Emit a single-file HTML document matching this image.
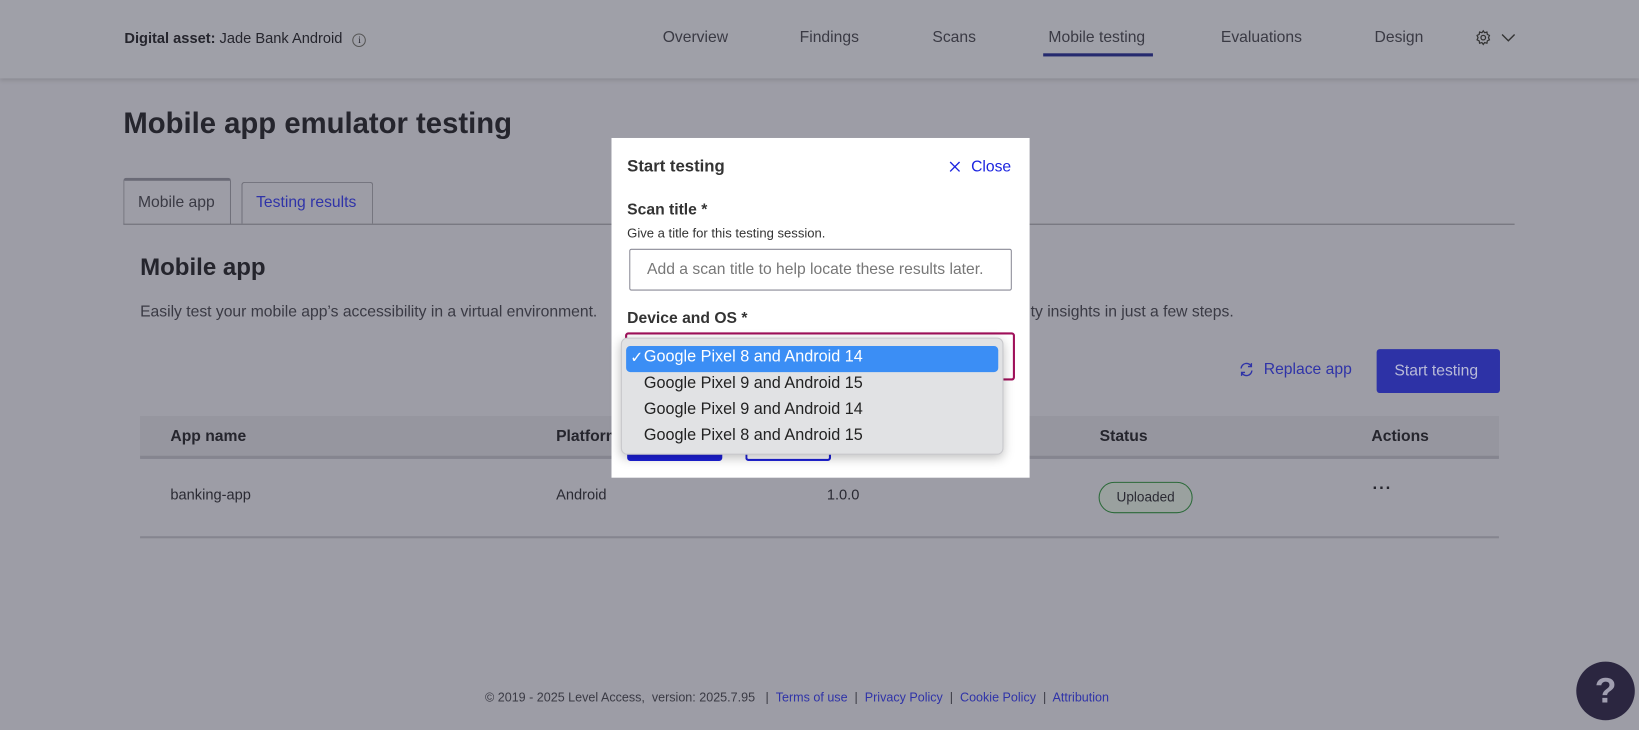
<!DOCTYPE html>
<html><head><style>
*{box-sizing:border-box;margin:0;padding:0}
body{width:1639px;height:729px;overflow:hidden;background:#9d9da6;font-family:"Liberation Sans",sans-serif;color:#2a2a33;position:relative}
#w{position:absolute;left:0;top:0;width:1568px;height:698px;transform:scale(1.04528);transform-origin:0 0}
.hdr{position:absolute;left:0;top:0;width:1568px;height:75px;background:#9fa0a8;box-shadow:0 2px 4px rgba(0,0,0,.12)}
.abs{position:absolute;white-space:nowrap}
.nav{font-size:15px;color:#3a3a44;top:27px}
.link{color:#2f33a8}
</style></head><body><div id="w">
<div class="hdr"></div>
<div class="abs" style="left:119px;top:28px;font-size:14px;color:#25252d"><b>Digital asset:</b> Jade Bank Android <span style="display:inline-block;width:13px;height:13px;border:1px solid #555;border-radius:50%;font-size:9px;text-align:center;line-height:11px;margin-left:6px;font-family:'Liberation Serif',serif">i</span></div>
<div class="abs nav" style="left:634px">Overview</div>
<div class="abs nav" style="left:765px">Findings</div>
<div class="abs nav" style="left:892px">Scans</div>
<div class="abs nav" style="left:1003px">Mobile testing</div>
<div class="abs" style="left:998px;top:51px;width:105px;height:3px;background:#252a6e"></div>
<div class="abs nav" style="left:1168px">Evaluations</div>
<div class="abs nav" style="left:1315px">Design</div>
<svg class="abs" style="left:1411px;top:28px" width="16" height="16" viewBox="0 0 16 16" fill="none" stroke="#333" stroke-width="1.2"><circle cx="8" cy="8" r="2.2"/><path d="M8 1.5l1.3 1.8 2.2-.6.4 2.2 2 1-.9 2.1.9 2.1-2 1-.4 2.2-2.2-.6L8 14.5l-1.3-1.8-2.2.6-.4-2.2-2-1 .9-2.1-.9-2.1 2-1 .4-2.2 2.2.6z"/></svg>
<svg class="abs" style="left:1436px;top:31px" width="14" height="10" viewBox="0 0 14 10" fill="none" stroke="#333" stroke-width="1.3"><path d="M1 2l6 6 6-6"/></svg>

<div class="abs" style="left:118px;top:102px;font-size:28px;font-weight:bold;color:#25252d">Mobile app emulator testing</div>
<div class="abs" style="left:118px;top:170px;width:103px;height:45px;border:1px solid #70707a;border-top:3px solid #6a6a76;border-bottom:none;border-radius:3px 3px 0 0;font-size:15px;color:#3a3a44;padding:12px 0 0 13px">Mobile app</div>
<div class="abs" style="left:231px;top:174px;width:126px;height:40px;border:1px solid #70707a;border-bottom:none;border-radius:3px 3px 0 0;font-size:15px;color:#2f33a8;padding:10px 0 0 13px">Testing results</div>
<div class="abs" style="left:118px;top:214px;width:1331px;height:1px;background:#6c6c76"></div>
<div class="abs" style="left:134px;top:242px;font-size:23px;font-weight:bold;color:#25252d">Mobile app</div>
<div class="abs" style="left:134px;top:290px;font-size:15px;color:#3a3a44">Easily test your mobile app’s accessibility in a virtual environment.</div>
<div class="abs" style="left:986px;top:290px;font-size:15px;color:#3a3a44">ty insights in just a few steps.</div>
<svg class="abs" style="left:1185px;top:346px" width="15" height="15" viewBox="0 0 16 16" fill="none" stroke="#2f33a8" stroke-width="1.4"><path d="M2.5 7A5.5 5.5 0 0 1 13 5M13.5 9A5.5 5.5 0 0 1 3 11M13 1.5V5H9.5M3 14.5V11h3.5"/></svg>
<div class="abs link" style="left:1209px;top:345px;font-size:15px">Replace app</div>
<div class="abs" style="left:1317px;top:334px;width:118px;height:42px;background:#2d32a6;border-radius:3px;color:#b9bbd8;font-size:15px;padding:12px 0 0 17px">Start testing</div>
<div class="abs" style="left:134px;top:398px;width:1300px;height:41px;background:#96969f;border-bottom:3px solid #85858f"></div>
<div class="abs" style="left:163px;top:409px;font-size:15px;font-weight:bold;color:#25252d">App name</div>
<div class="abs" style="left:532px;top:409px;font-size:15px;font-weight:bold;color:#25252d">Platform</div>
<div class="abs" style="left:1052px;top:409px;font-size:15px;font-weight:bold;color:#25252d">Status</div>
<div class="abs" style="left:1312px;top:409px;font-size:15px;font-weight:bold;color:#25252d">Actions</div>
<div class="abs" style="left:163px;top:465px;font-size:14px;color:#2a2a33">banking-app</div>
<div class="abs" style="left:532px;top:465px;font-size:14px;color:#2a2a33">Android</div>
<div class="abs" style="left:791px;top:465px;font-size:14px;color:#2a2a33">1.0.0</div>
<div class="abs" style="left:1051px;top:461px;width:90px;height:30px;border:1px solid #2c6a3a;border-radius:15px;background:#9aa19f;font-size:13px;color:#2a2a33;text-align:center;line-height:28px">Uploaded</div>
<div class="abs" style="left:1313px;top:459px;font-size:16px;font-weight:bold;color:#25252d;letter-spacing:1px">···</div>
<div class="abs" style="left:134px;top:513px;width:1300px;height:2px;background:#85858f"></div>

<div class="abs" style="left:464px;top:660px;font-size:12px;color:#3a3a44">© 2019 - 2025 Level Access,&nbsp; version: 2025.7.95 &nbsp; | &nbsp;<span class="link">Terms of use</span> &nbsp;|&nbsp; <span class="link">Privacy Policy</span> &nbsp;|&nbsp; <span class="link">Cookie Policy</span> &nbsp;|&nbsp; <span class="link">Attribution</span></div>
<div class="abs" style="left:1508px;top:633px;width:56px;height:56px;border-radius:50%;background:#2b2640;color:#a09eb0;font-size:34px;font-weight:bold;text-align:center;line-height:56px">?</div>

<div class="abs" style="left:585px;top:132px;width:400px;height:325px;background:#fff"></div>
<div class="abs" style="left:600px;top:151px;font-size:16px;font-weight:bold;color:#333">Start testing</div>
<svg class="abs" style="left:908px;top:154px" width="11" height="11" viewBox="0 0 11 11" stroke="#1c24e0" stroke-width="1.3"><path d="M1 1l9 9M10 1l-9 9"/></svg>
<div class="abs" style="left:929px;top:151px;font-size:15px;color:#1c24e0">Close</div>
<div class="abs" style="left:600px;top:192px;font-size:15px;font-weight:bold;color:#333">Scan title *</div>
<div class="abs" style="left:600px;top:216px;font-size:12.5px;color:#333">Give a title for this testing session.</div>
<div class="abs" style="left:602px;top:238px;width:366px;height:40px;border:1px solid #8a8a96;border-radius:2px;font-size:15px;color:#777;padding:10px 0 0 16px">Add a scan title to help locate these results later.</div>
<div class="abs" style="left:600px;top:296px;font-size:15px;font-weight:bold;color:#333">Device and OS *</div>
<div class="abs" style="left:598px;top:318px;width:373px;height:46px;border:2px solid #a0105a;border-radius:3px"></div>
<div class="abs" style="left:600px;top:425px;width:91px;height:16px;background:#1c1fd6;border-radius:0 0 3px 3px"></div>
<div class="abs" style="left:713px;top:425px;width:82px;height:16px;border:2px solid #1c1fd6;border-top:none;border-radius:0 0 3px 3px"></div>
<div class="abs" style="left:594px;top:323px;width:366px;height:112px;background:#e1e2e4;border-radius:6px;box-shadow:0 3px 10px rgba(0,0,0,.25);border:1px solid #c8c8cc"></div>
<div class="abs" style="left:599px;top:331px;width:356px;height:25px;background:#3b8ef5;border-radius:4px"></div>
<div class="abs" style="left:603px;top:333px;font-size:15px;color:#fff">✓</div>
<div class="abs" style="left:616px;top:333px;font-size:15.5px;color:#fff">Google Pixel 8 and Android 14</div>
<div class="abs" style="left:616px;top:358px;font-size:15.5px;color:#222">Google Pixel 9 and Android 15</div>
<div class="abs" style="left:616px;top:383px;font-size:15.5px;color:#222">Google Pixel 9 and Android 14</div>
<div class="abs" style="left:616px;top:408px;font-size:15.5px;color:#222">Google Pixel 8 and Android 15</div>
</div></body></html>
